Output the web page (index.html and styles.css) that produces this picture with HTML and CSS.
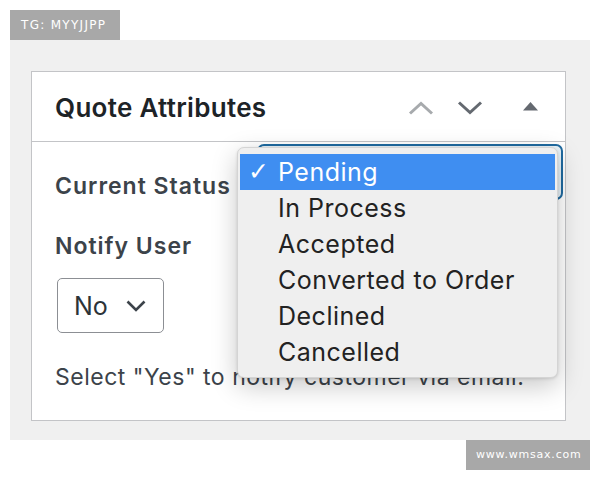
FILE: index.html
```html
<!DOCTYPE html>
<html>
<head>
<meta charset="utf-8">
<link rel="stylesheet" href="styles.css">
</head>
<body>
<div class="page">
  <div class="top"><div class="tag">TG: MYYJJPP</div></div>
  <div class="stage">
    <div class="panel">
      <div class="head">
        <h2 class="title">Quote Attributes</h2>
        <div class="tools">
          <svg class="ic-up" width="26" height="14" viewBox="0 0 26 14"><polyline points="2,12.5 13,2.5 24,12.5" fill="none" stroke="#a7aaad" stroke-width="3"/></svg>
          <svg class="ic-down" width="26" height="14" viewBox="0 0 26 14"><polyline points="2,1.5 13,11.5 24,1.5" fill="none" stroke="#646970" stroke-width="3"/></svg>
          <svg class="ic-tri" width="15" height="9" viewBox="0 0 15 9"><polygon points="0,8.5 7.5,0 15,8.5" fill="#646970"/></svg>
        </div>
      </div>
      <div class="body">
        <div class="status-row">
          <span class="label status-label">Current Status</span>
          <div class="select-main"></div>
        </div>
        <div class="label notify-label">Notify User</div>
        <div class="select-no">
          <span class="no-text">No</span>
          <svg width="20" height="12" viewBox="0 0 20 12"><polyline points="1.5,1.5 10,10 18.5,1.5" fill="none" stroke="#3c434a" stroke-width="2.6"/></svg>
        </div>
        <p class="desc">Select "Yes" to notify customer via email.</p>
      </div>
      <ul class="menu">
        <li class="opt active"><span class="check">✓</span>Pending</li>
        <li class="opt">In Process</li>
        <li class="opt">Accepted</li>
        <li class="opt">Converted to Order</li>
        <li class="opt">Declined</li>
        <li class="opt">Cancelled</li>
      </ul>
    </div>
  </div>
  <div class="bottom"><div class="tag tag-site">www.wmsax.com</div></div>
</div>
</body>
</html>
```
FILE: styles.css
```css
html, body {
  margin: 0;
  padding: 0;
  background: #ffffff;
}
.page {
  width: 580px;
  padding: 10px 10px 0 10px;
  font-family: Inter, "Liberation Sans", Arial, sans-serif;
}
.top {
  display: flex;
}
.tag {
  background: #a8a8a8;
  color: #ffffff;
  font-family: "DejaVu Sans", Verdana, sans-serif;
  font-size: 12px;
  letter-spacing: 1.3px;
  height: 30px;
  line-height: 30px;
  width: 110px;
  box-sizing: border-box;
  padding-left: 11px;
  white-space: nowrap;
}
.stage {
  background: #f0f0f0;
  height: 400px;
  box-sizing: border-box;
  padding: 31px 24px 0 21px;
}
.panel {
  position: relative;
  background: #ffffff;
  border: 1px solid #c3c4c7;
  height: 350px;
  box-sizing: border-box;
}
.head {
  height: 70px;
  box-sizing: border-box;
  border-bottom: 1px solid #c3c4c7;
  display: flex;
  align-items: center;
  padding: 2px 27px 0 23px;
}
.title {
  margin: 0;
  font-size: 26px;
  font-weight: 600;
  color: #1d2327;
  flex: 1;
  letter-spacing: 0.3px;
}
.tools {
  display: flex;
  align-items: center;
}
.tools svg {
  display: block;
}
.ic-down {
  margin-left: 23px;
}
.ic-tri {
  margin-left: 40px;
  margin-top: -3px;
}
.body {
  padding: 2px 2px 0 23px;
}
.status-row {
  display: flex;
  justify-content: space-between;
  align-items: flex-start;
}
.label {
  font-size: 23px;
  font-weight: 600;
  color: #3c434a;
  line-height: 28px;
  letter-spacing: 1px;
}
.status-label {
  margin-top: 28px;
}
.select-main {
  width: 306px;
  height: 56px;
  box-sizing: border-box;
  border: 2px solid #1f6aa0;
  border-radius: 7px;
  background: #e8f3f9;
}
.notify-label {
  margin-top: 32px;
}
.select-no {
  margin-top: 18px;
  margin-left: 2px;
  width: 107px;
  height: 55px;
  box-sizing: border-box;
  border: 1.5px solid #8c8f94;
  border-radius: 5px;
  display: flex;
  align-items: center;
  padding-left: 16px;
  gap: 18px;
}
.select-no svg {
  display: block;
}
.no-text {
  font-size: 25px;
  color: #2c3338;
}
.desc {
  margin: 30px 0 0 0;
  font-size: 23px;
  line-height: 28px;
  color: #3c434a;
  letter-spacing: 0.5px;
  white-space: nowrap;
}
.menu {
  position: absolute;
  left: 205px;
  top: 75px;
  width: 321px;
  margin: 0;
  padding: 6px 2px 7px 2px;
  list-style: none;
  box-sizing: border-box;
  background: #efefef;
  border: 1px solid #d4d4d4;
  border-radius: 7px;
  box-shadow: 0 8px 26px rgba(0, 0, 0, 0.22), 0 1px 3px rgba(0, 0, 0, 0.12);
}
.opt {
  position: relative;
  height: 36px;
  line-height: 36px;
  padding-left: 38px;
  font-size: 25px;
  letter-spacing: 0.5px;
  color: #222222;
}
.opt.active {
  background: #3f8ef1;
  color: #ffffff;
}
.check {
  position: absolute;
  left: 8px;
  top: 0;
  font-size: 25px;
  font-family: "DejaVu Sans", sans-serif;
}
.bottom {
  display: flex;
  justify-content: flex-end;
}
.tag-site {
  width: 124px;
  padding-left: 10px;
  font-size: 11px;
  letter-spacing: 0.8px;
}
```
